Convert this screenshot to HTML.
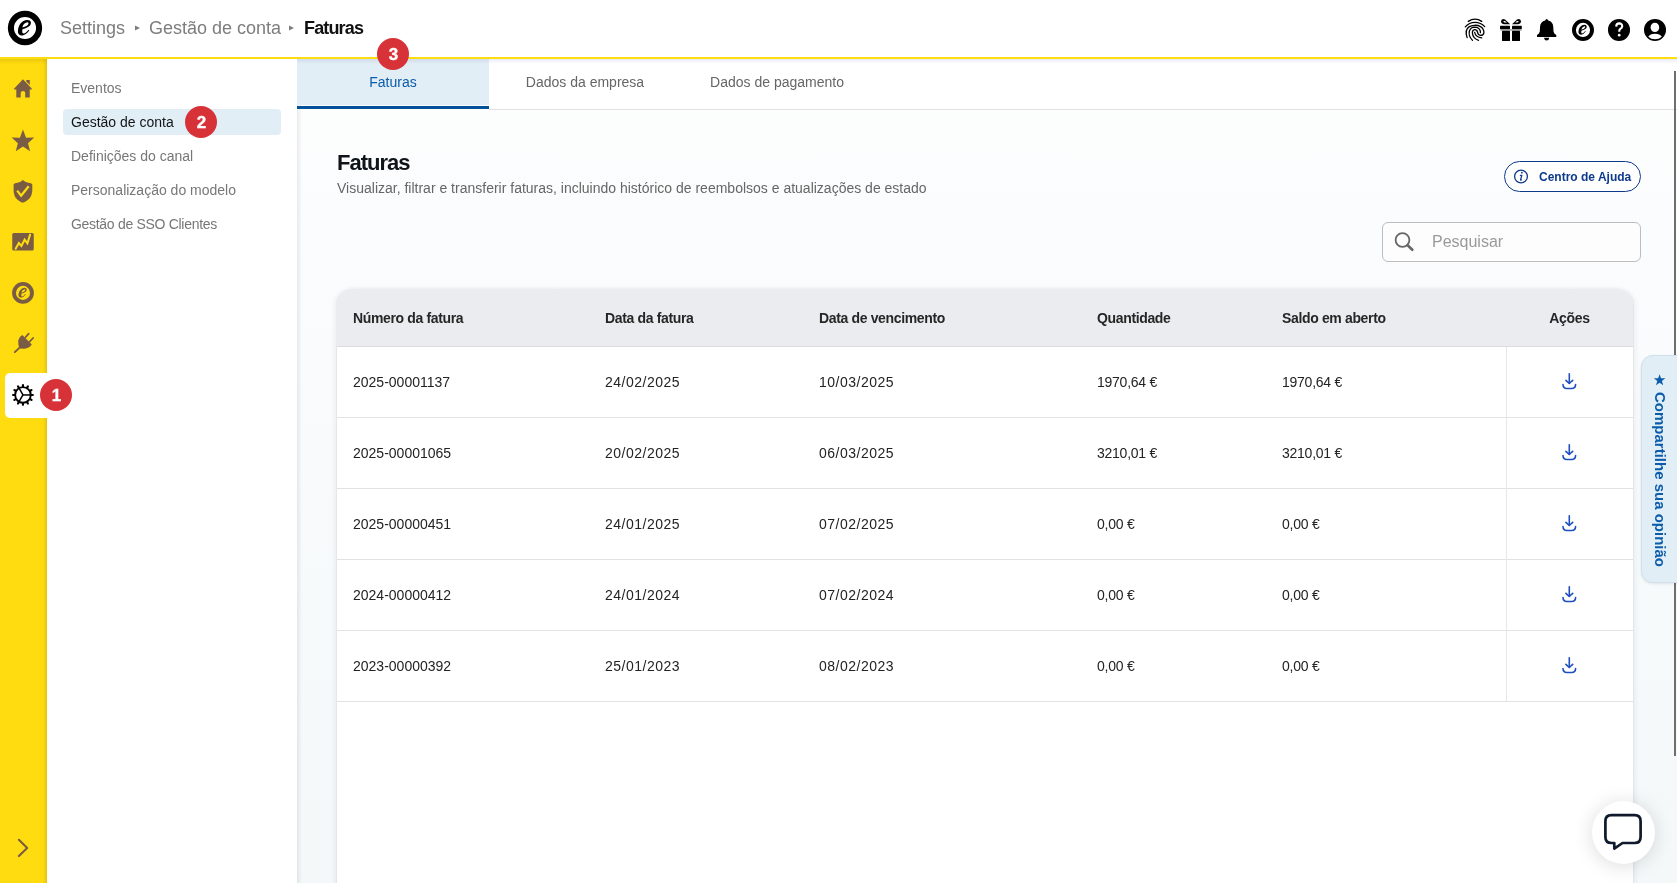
<!DOCTYPE html>
<html><head><meta charset="utf-8">
<style>
*{box-sizing:border-box;margin:0;padding:0}
html,body{width:1677px;height:883px;overflow:hidden;background:#fff;font-family:"Liberation Sans",sans-serif;color:#222}
.a{position:absolute}
.t{position:absolute;white-space:nowrap;line-height:1;will-change:transform}
svg{position:absolute;overflow:visible}
.badge{position:absolute;width:32.2px;height:32.2px;border-radius:50%;background:#D83239;color:#fff;font-weight:700;font-size:17px;text-align:center;line-height:33.4px;-webkit-text-stroke:0.35px #fff;text-indent:0.6px;will-change:transform}
.bc{color:#7d7d7d;font-size:18px;top:18.8px}
.nv{color:#777;font-size:14px;left:71px}
.tab{top:74.9px;font-size:14px;color:#666;width:192px;text-align:center}
.th{font-size:14px;font-weight:700;color:#262626;top:311px;letter-spacing:-0.35px}
.td{font-size:14px;color:#232323}
.hl{left:337px;width:1296px;height:1px;background:#e2e2e2}
</style></head><body>

<!-- ========== HEADER ========== -->
<svg style="left:0;top:0" width="1" height="1">
  <defs>
    <path id="ee" fill-rule="evenodd" d="M29.3 30.4 Q25.8 34.9 22.2 35.4 Q17.8 35.6 17.9 31 Q18.2 24.5 23 21.3 Q26.3 19.4 29 20.3 Q31.6 21.3 30.7 24.2 Q29.5 27.2 22.5 29.2 Q21.6 33 23.4 33.5 Q25.6 33.7 28.6 29.8 Z M22.4 27.6 Q23.2 23.2 27.2 22.3 Q28.9 22.2 28.5 23.8 Q27.5 26.3 22.4 27.6 Z"/>
  </defs>
  <circle cx="25" cy="28" r="14.1" fill="#fff" stroke="#000" stroke-width="6.1"/>
  <use href="#ee" fill="#000"/>
</svg>

<div class="t bc" style="left:60px">Settings</div>
<svg style="left:0;top:0" width="1" height="1"><path d="M135 25.5 L140 28 L135 30.5Z" fill="#7d7d7d"/><path d="M289 25.5 L294 28 L289 30.5Z" fill="#7d7d7d"/></svg>
<div class="t bc" style="left:149px">Gestão de conta</div>
<div class="t bc" style="left:304px;color:#111;font-weight:700;letter-spacing:-0.85px">Faturas</div>

<svg style="left:0;top:0" width="1" height="1">
  <!-- fingerprint -->
  <g fill="none" stroke="#000" stroke-width="1.3" stroke-linecap="round">
    <path d="M1468.3 21.4 A11.7 11.7 0 0 1 1481.7 21.4"/>
    <path d="M1465.3 26.8 A12.9 12.9 0 0 1 1484.7 26.6"/>
    <path d="M1467.1 37.6 C1465.5 33 1466 29 1469 26.9 C1471.5 25.2 1477 24.4 1480.5 26.6 C1483 28.2 1484 30.5 1483.9 32.6 Q1483.5 35.5 1480.5 35.4 Q1477.8 35 1477.5 32 Q1477 29.6 1474.5 29.7 Q1472.3 30 1472.4 33 Q1472.8 38.3 1478.5 40.4"/>
    <path d="M1472.5 40.4 Q1468.2 36 1469.4 31 Q1470.8 27.2 1474.7 27.2 Q1479.3 27.4 1480.3 31 L1480.4 32.7"/>
    <path d="M1474.7 32.5 Q1475.5 37 1481.7 37.9"/>
  </g>
  <!-- gift -->
  <g fill="#000">
    <path d="M1510.2 24.3 L1505 19.5 Q1502 18.2 1501 21 Q1500.8 24 1504.5 24.3 Z M1505 21 Q1504 20.6 1503.3 21.5 Q1503.5 22.6 1505 22.6 L1506.8 22.6 Z" fill-rule="evenodd"/>
    <path d="M1512 24.3 L1517 19.5 Q1520 18.2 1521 21 Q1521.2 24 1517.5 24.3 Z M1517 21 Q1518 20.6 1518.7 21.5 Q1518.5 22.6 1517 22.6 L1515.2 22.6 Z" fill-rule="evenodd"/>
    <rect x="1500" y="25.8" width="10" height="3.4" rx="0.6"/>
    <rect x="1512" y="25.8" width="9.8" height="3.4" rx="0.6"/>
    <rect x="1500.5" y="29.3" width="21" height="1.3" fill="#888"/>
    <rect x="1502" y="30.8" width="8" height="10.2" rx="0.6"/>
    <rect x="1512" y="30.8" width="8" height="10.2" rx="0.6"/>
  </g>
  <!-- bell -->
  <path fill="#000" d="M1546.7 19 Q1547.8 19 1548.2 20.5 Q1553 21.5 1553.3 27 L1553.5 31.5 Q1553.8 33.5 1556.3 35 L1556.3 37 L1537 37 L1537 35 Q1539.5 33.5 1539.8 31.5 L1540 27 Q1540.3 21.5 1545.2 20.5 Q1545.6 19 1546.7 19 Z M1544 37.8 L1549.3 37.8 Q1549 40.5 1546.65 40.6 Q1544.3 40.5 1544 37.8Z"/>
  <!-- e circle -->
  <g transform="translate(1583,29.9) scale(0.641) translate(-25,-28)">
    <circle cx="25" cy="28" r="14.1" fill="#fff" stroke="#000" stroke-width="6.1"/>
    <use href="#ee" fill="#000"/>
  </g>
  <!-- help -->
  <circle cx="1619" cy="29.9" r="11" fill="#000"/>
  <path d="M1616.2 26.6 Q1616.3 23.4 1619.2 23.4 Q1622.3 23.5 1622.2 26.2 Q1622.1 27.8 1620.5 28.7 Q1619.2 29.6 1619.2 31.7" fill="none" stroke="#fff" stroke-width="2.1"/>
  <circle cx="1619.2" cy="35.2" r="1.35" fill="#fff"/>
  <!-- user -->
  <circle cx="1655" cy="29.9" r="11" fill="#000"/>
  <ellipse cx="1654.9" cy="27.4" rx="4.3" ry="4.7" fill="#fff"/>
  <path d="M1648.3 36.8 Q1650 33.7 1655 33.7 Q1660 33.7 1661.8 36.8 Q1659 39.3 1655 39.3 Q1651 39.3 1648.3 36.8Z" fill="#fff"/>
</svg>

<div class="a" style="left:0;top:57px;width:1677px;height:2px;background:#FFDC0F"></div>

<!-- ========== SIDEBAR ========== -->
<div class="a" style="left:0;top:59px;width:47px;height:824px;background:#FFDC0F"></div>
<div class="a" style="left:42px;top:59px;width:5px;height:824px;background:linear-gradient(to right,rgba(110,85,0,0),rgba(110,85,0,.08) 60%,rgba(110,85,0,.2))"></div>
<div class="a" style="left:0;top:59px;width:47px;height:5px;background:linear-gradient(to bottom,rgba(110,85,0,.14),rgba(110,85,0,0))"></div>
<svg style="left:0;top:0" width="1" height="1">
  <g fill="#7A5C45">
    <path d="M14 88.7 L22.95 79.2 L31.9 88.7 Q32 89.6 31.2 89.6 L29.75 89.6 L29.75 97.6 L25.2 97.6 L25.2 92.7 Q25.1 90.9 22.95 90.9 Q20.8 90.9 20.7 92.7 L20.7 97.6 L16.3 97.6 L16.3 89.6 L14.7 89.6 Q13.9 89.6 14 88.7 Z"/>
    <path d="M26.3 80.1 L29.75 80.1 L29.75 84.9 L26.3 81.5 Z"/>
    <path d="M22.95 129.6 L26 137.7 L34.2 137.6 L28 143.3 L30.1 151.3 L22.95 146.6 L15.8 151.3 L17.85 143.3 L11.6 137.6 L19.9 137.7 Z"/>
    <path d="M22.95 180 Q21 182.2 17.5 182.8 Q14.5 183.1 13.6 184.2 L13.6 190.5 Q13.8 196.8 17.5 199.8 Q20.5 202.3 22.7 202.7 Q25 202.3 28.1 199.8 Q32 196.8 32.3 190.5 L32.3 184.2 Q31.4 183.1 28.4 182.8 Q24.9 182.2 22.95 180 Z"/>
    <rect x="12.25" y="233" width="21.5" height="17.6" rx="1.6"/>
    <path d="M22.3 335.1 L31.8 344.6 Q29 348.6 24.5 348.7 L19.5 348.4 Q18 345 18.2 340.5 Q18.8 337 22.3 335.1 Z"/>
  </g>
  <g stroke="#7A5C45" stroke-linecap="round" fill="none">
    <path d="M25.3 337.5 L28.7 333.6 M29.7 341.6 L33.1 338" stroke-width="1.8"/>
    <path d="M19.6 347.6 L14.8 352.1" stroke-width="1.9"/>
  </g>
  <path d="M17.2 190.6 L21.1 195.6 L28.7 186.2" fill="none" stroke="#FFDC0F" stroke-width="2.3"/>
  <polyline points="15.6,248.7 18.9,243 21.4,245.9 24.6,239.7 27.4,243.3 30.1,234.6" fill="none" stroke="#FFDC0F" stroke-width="2" stroke-linecap="round" stroke-linejoin="miter"/>
  <g transform="translate(23,292.9) scale(0.636) translate(-25,-28)">
    <circle cx="25" cy="28" r="14.1" fill="none" stroke="#7A5C45" stroke-width="6.1"/>
    <use href="#ee" fill="#7A5C45"/>
  </g>
  <path d="M18.9 839.8 L27.2 848 L18.9 856.1" fill="none" stroke="#7A5C45" stroke-width="2.1" stroke-linecap="round" stroke-linejoin="round"/>
</svg>
<!-- gear box -->
<div class="a" style="left:5px;top:373px;width:45px;height:45px;background:#fff;border-radius:5px 0 0 5px"></div>
<svg style="left:0;top:0" width="1" height="1">
  <g transform="translate(22.95,394.95)">
    <g stroke="#000" stroke-width="2.1" stroke-linecap="round">
      <line x1="0" y1="-8.2" x2="0" y2="-9.9"/>
      <line x1="0" y1="-8.2" x2="0" y2="-9.9" transform="rotate(30)"/>
      <line x1="0" y1="-8.2" x2="0" y2="-9.9" transform="rotate(60)"/>
      <line x1="0" y1="-8.2" x2="0" y2="-9.9" transform="rotate(90)"/>
      <line x1="0" y1="-8.2" x2="0" y2="-9.9" transform="rotate(120)"/>
      <line x1="0" y1="-8.2" x2="0" y2="-9.9" transform="rotate(150)"/>
      <line x1="0" y1="-8.2" x2="0" y2="-9.9" transform="rotate(180)"/>
      <line x1="0" y1="-8.2" x2="0" y2="-9.9" transform="rotate(210)"/>
      <line x1="0" y1="-8.2" x2="0" y2="-9.9" transform="rotate(240)"/>
      <line x1="0" y1="-8.2" x2="0" y2="-9.9" transform="rotate(270)"/>
      <line x1="0" y1="-8.2" x2="0" y2="-9.9" transform="rotate(300)"/>
      <line x1="0" y1="-8.2" x2="0" y2="-9.9" transform="rotate(330)"/>
    </g>
    <circle r="7.8" fill="#fff" stroke="#000" stroke-width="1.9"/>
    <g stroke="#000" stroke-width="1.5">
      <line x1="0" y1="0" x2="7.5" y2="0"/>
      <line x1="0" y1="0" x2="-3.75" y2="-6.5"/>
      <line x1="0" y1="0" x2="-3.75" y2="6.5"/>
    </g>
  </g>
</svg>

<!-- ========== NAV PANEL ========== -->
<div class="a" style="left:47px;top:59px;width:250px;height:824px;background:#fff"></div>
<div class="t nv" style="top:81.2px">Eventos</div>
<div class="a" style="left:63px;top:109px;width:218px;height:26px;background:#E1EEF6;border-radius:4px"></div>
<div class="t nv" style="top:115.2px;color:#141414">Gestão de conta</div>
<div class="t nv" style="top:149.2px">Definições do canal</div>
<div class="t nv" style="top:183.2px">Personalização do modelo</div>
<div class="t nv" style="top:217.2px;letter-spacing:-0.3px">Gestão de SSO Clientes</div>

<!-- ========== MAIN ========== -->
<div class="a" style="left:297px;top:59px;width:1380px;height:824px;background:linear-gradient(to bottom,#fefefe 0px,#fbfcfd 140px,#f7fafb 516px,#f4f8f9 824px)"></div>
<div class="a" style="left:297px;top:59px;width:1380px;height:50px;background:#fff"></div>
<div class="a" style="left:297px;top:59px;width:5px;height:824px;background:linear-gradient(to right,rgba(30,45,70,.09),rgba(30,45,70,0))"></div>
<div class="a" style="left:297px;top:59px;width:192px;height:46px;background:#E1EEF6"></div>
<div class="a" style="left:297px;top:106px;width:192px;height:3px;background:#00529B"></div>
<div class="a" style="left:489px;top:109px;width:1188px;height:1px;background:#e2e2e2"></div>
<div class="a" style="left:297px;top:59px;width:1380px;height:5px;background:linear-gradient(to bottom,rgba(30,50,110,.09),rgba(30,50,110,0))"></div>
<div class="t tab" style="left:297px;color:#0B5CAB">Faturas</div>
<div class="t tab" style="left:489px">Dados da empresa</div>
<div class="t tab" style="left:681px">Dados de pagamento</div>

<div class="t" style="left:337px;top:152px;font-size:22px;font-weight:700;color:#0f141a;letter-spacing:-1px">Faturas</div>
<div class="t" style="left:337px;top:180.9px;font-size:14px;color:#666">Visualizar, filtrar e transferir faturas, incluindo histórico de reembolsos e atualizações de estado</div>

<!-- help button -->
<div class="a" style="left:1504px;top:161px;width:137px;height:31px;border:1.5px solid #0E3A8C;border-radius:16px;background:#fff"></div>
<svg style="left:0;top:0" width="1" height="1">
  <circle cx="1521" cy="176.5" r="6.4" fill="none" stroke="#0E3A8C" stroke-width="1.3"/>
  <path d="M1521.9 172.6 L1521.9 172.7" stroke="#0E3A8C" stroke-width="1.7" stroke-linecap="round"/>
  <path d="M1520.4 175.3 L1521.8 175.3 L1520.6 179.6 Q1520.5 180.3 1521.4 180" fill="none" stroke="#0E3A8C" stroke-width="1.3" stroke-linecap="round" stroke-linejoin="round"/>
</svg>
<div class="t" style="left:1538.5px;top:170.5px;font-size:12px;font-weight:700;color:#0E3A8C">Centro de Ajuda</div>

<!-- search -->
<div class="a" style="left:1382px;top:222px;width:259px;height:40px;border:1px solid #bdbdbd;border-radius:6px;background:#fdfdfe"></div>
<svg style="left:0;top:0" width="1" height="1">
  <circle cx="1402.5" cy="240" r="6.9" fill="none" stroke="#666" stroke-width="1.8"/>
  <line x1="1407.6" y1="245.2" x2="1412.3" y2="249.8" stroke="#666" stroke-width="2.6" stroke-linecap="round"/>
</svg>
<div class="t" style="left:1432px;top:233.5px;font-size:16px;color:#9a9a9a">Pesquisar</div>

<!-- ========== TABLE ========== -->
<div class="a" style="left:336px;top:289px;width:1298px;height:620px;background:#fff;border-radius:16px 16px 0 0;border-left:1px solid #e4e7ea;border-right:1px solid #e4e7ea;box-shadow:-2px 0 4px rgba(30,40,60,.05),2px 0 4px rgba(30,40,60,.05)"></div>
<div class="a" style="left:336px;top:289px;width:1297px;height:57px;background:#EBECF0;border-radius:16px 16px 0 0"></div>
<div class="a" style="left:337px;top:346px;width:1296px;height:1px;background:#dcdcdc"></div>
<div class="t th" style="left:353px">Número da fatura</div>
<div class="t th" style="left:605px">Data da fatura</div>
<div class="t th" style="left:819px">Data de vencimento</div>
<div class="t th" style="left:1097px">Quantidade</div>
<div class="t th" style="left:1282px">Saldo em aberto</div>
<div class="t th" style="left:1506px;width:127px;text-align:center">Ações</div>

<div class="a hl" style="top:417px"></div>
<div class="a hl" style="top:488px"></div>
<div class="a hl" style="top:559px"></div>
<div class="a hl" style="top:630px"></div>
<div class="a hl" style="top:701px"></div>
<div class="a" style="left:1506px;top:347px;width:1px;height:354px;background:#e8e8e8"></div>

<div class="t td" style="left:353px;top:375.3px">2025-00001137</div>
<div class="t td" style="left:605px;top:375.3px;letter-spacing:0.5px">24/02/2025</div>
<div class="t td" style="left:819px;top:375.3px;letter-spacing:0.5px">10/03/2025</div>
<div class="t td" style="left:1097px;top:375.3px;letter-spacing:-0.25px">1970,64 €</div>
<div class="t td" style="left:1282px;top:375.3px;letter-spacing:-0.25px">1970,64 €</div>

<div class="t td" style="left:353px;top:446.3px">2025-00001065</div>
<div class="t td" style="left:605px;top:446.3px;letter-spacing:0.5px">20/02/2025</div>
<div class="t td" style="left:819px;top:446.3px;letter-spacing:0.5px">06/03/2025</div>
<div class="t td" style="left:1097px;top:446.3px;letter-spacing:-0.25px">3210,01 €</div>
<div class="t td" style="left:1282px;top:446.3px;letter-spacing:-0.25px">3210,01 €</div>

<div class="t td" style="left:353px;top:517.3px">2025-00000451</div>
<div class="t td" style="left:605px;top:517.3px;letter-spacing:0.5px">24/01/2025</div>
<div class="t td" style="left:819px;top:517.3px;letter-spacing:0.5px">07/02/2025</div>
<div class="t td" style="left:1097px;top:517.3px;letter-spacing:-0.25px">0,00 €</div>
<div class="t td" style="left:1282px;top:517.3px;letter-spacing:-0.25px">0,00 €</div>

<div class="t td" style="left:353px;top:588.3px">2024-00000412</div>
<div class="t td" style="left:605px;top:588.3px;letter-spacing:0.5px">24/01/2024</div>
<div class="t td" style="left:819px;top:588.3px;letter-spacing:0.5px">07/02/2024</div>
<div class="t td" style="left:1097px;top:588.3px;letter-spacing:-0.25px">0,00 €</div>
<div class="t td" style="left:1282px;top:588.3px;letter-spacing:-0.25px">0,00 €</div>

<div class="t td" style="left:353px;top:659.3px">2023-00000392</div>
<div class="t td" style="left:605px;top:659.3px;letter-spacing:0.5px">25/01/2023</div>
<div class="t td" style="left:819px;top:659.3px;letter-spacing:0.5px">08/02/2023</div>
<div class="t td" style="left:1097px;top:659.3px;letter-spacing:-0.25px">0,00 €</div>
<div class="t td" style="left:1282px;top:659.3px;letter-spacing:-0.25px">0,00 €</div>

<svg style="left:0;top:0" width="1" height="1">
  <defs>
    <g id="dl" fill="none" stroke="#1F4FBF" stroke-width="1.6" stroke-linecap="round">
      <path d="M0 -7.2 V2.2"/>
      <path d="M-3.4 -0.7 L0 2.5 L3.4 -0.7" stroke-linejoin="round"/>
      <path d="M-6.3 3.6 Q-6.2 7.5 -2.5 7.5 H2.5 Q6.2 7.5 6.3 3.6"/>
    </g>
  </defs>
  <use href="#dl" x="1569.3" y="381"/>
  <use href="#dl" x="1569.3" y="452"/>
  <use href="#dl" x="1569.3" y="523"/>
  <use href="#dl" x="1569.3" y="594"/>
  <use href="#dl" x="1569.3" y="665"/>
</svg>

<!-- scrollbar -->
<div class="a" style="left:1674px;top:71px;width:2px;height:685px;background:#6e6e6e"></div>

<!-- feedback tab -->
<div class="a" style="left:1641px;top:355px;width:50px;height:228px;background:#E1EEF6;border:1px solid #cfe0ea;border-radius:12px 0 0 12px;box-shadow:0 1px 3px rgba(20,40,70,.10)"></div>
<svg style="left:0;top:0" width="1" height="1"><path transform="translate(1659.6,380.2) scale(0.55)" d="M0 -11 L2.6 -3.6 L10.5 -3.4 L4.2 1.4 L6.5 9 L0 4.6 L-6.5 9 L-4.2 1.4 L-10.5 -3.4 L-2.6 -3.6 Z" fill="#0B5CAB"/></svg>
<div class="t" style="left:1652.5px;top:392.2px;writing-mode:vertical-rl;font-size:15px;font-weight:700;color:#0B5CAB">Compartilhe sua opinião</div>

<!-- badges -->
<div class="badge" style="left:40.3px;top:379px">1</div>
<div class="badge" style="left:185.2px;top:106px">2</div>
<div class="badge" style="left:377.2px;top:37.9px">3</div>

<!-- chat -->
<div class="a" style="left:1592px;top:801px;width:63px;height:63px;border-radius:50%;background:#fff;box-shadow:0 2px 20px rgba(0,0,0,.14)"></div>
<svg style="left:0;top:0" width="1" height="1">
  <path d="M1611.4 815.2 H1634.6 Q1640.6 815.2 1640.6 821.2 V837 Q1640.6 843 1634.6 843 H1622.5 L1614.3 848.6 V843 H1611.4 Q1605.4 843 1605.4 837 V821.2 Q1605.4 815.2 1611.4 815.2Z" fill="none" stroke="#101a2c" stroke-width="2.7" stroke-linejoin="round"/>
</svg>

</body></html>
